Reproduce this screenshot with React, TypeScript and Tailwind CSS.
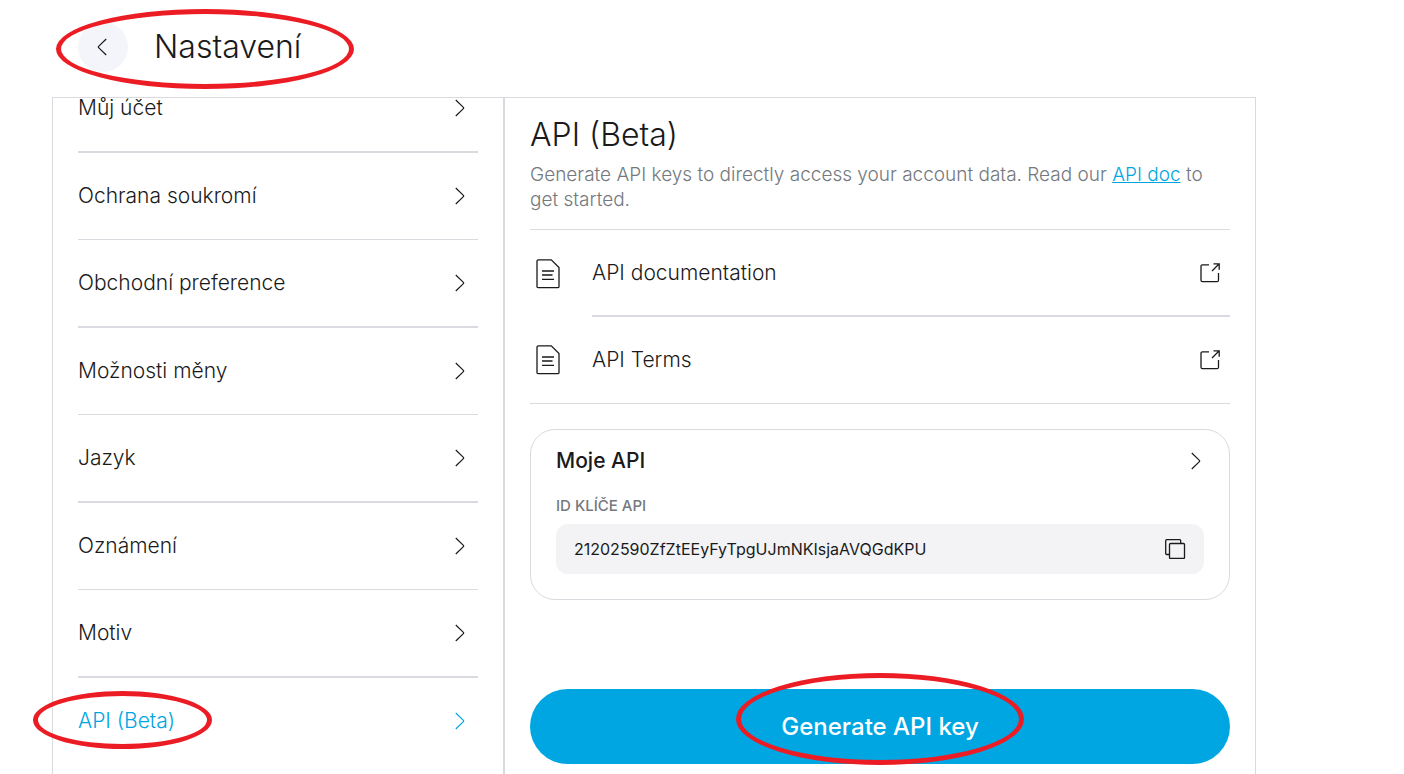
import { clsx } from 'clsx';

const menuItems = [
  'Můj účet',
  'Ochrana soukromí',
  'Obchodní preference',
  'Možnosti měny',
  'Jazyk',
  'Oznámení',
  'Motiv',
  'API (Beta)',
];

const activeItem = 'API (Beta)';

const apiLinks = ['API documentation', 'API Terms'];

export default function App() {
  return (
    <div className="flex h-screen flex-col overflow-hidden bg-white font-['Inter','Liberation_Sans',sans-serif] text-[#1a1a1a]">
      <header className="flex h-[97px] shrink-0 items-start pl-[78px] pt-[22px]">
        <div className="relative flex items-center gap-[26px]">
          <button type="button" aria-label="Zpět" className="flex size-[50px] items-center justify-center rounded-full bg-[#f4f5fa] pr-0.5">
            <Chevron className="rotate-180" />
          </button>
          <h1 className="text-[32px] font-light leading-10">Nastavení</h1>
          <Highlight className="-left-[22px] -top-[13px] h-20 w-[298px]" />
        </div>
      </header>

      <div className="ml-[52px] flex w-full max-w-[1204px] flex-1 border-x border-t border-[#dadae0]">
        <SettingsMenu />
        <ApiPanel />
      </div>
    </div>
  );
}

function SettingsMenu() {
  return (
    <nav className="w-[452px] shrink-0 border-r-2 border-[#dadae0] px-[25px]">
      {/* list is scrolled a little, first row sits partly above the edge */}
      <ul className="-mt-[33px]">
        {menuItems.map((item, index) => {
          const active = item === activeItem;
          return (
            <li
              key={item}
              className={clsx(
                'border-[#dadae0]',
                !active && (index % 2 === 0 ? 'border-b-2' : 'border-b'),
              )}
            >
              <a
                href="#"
                className={clsx(
                  'flex h-[86px] items-center justify-between pr-[13px] text-[21px] font-light leading-7',
                  active && 'text-[#00a6e1]',
                )}
              >
                <span className="relative">
                  {item}
                  {active && <Highlight className="-left-[45px] -top-4 h-[58px] w-[179px]" />}
                </span>
                <Chevron />
              </a>
            </li>
          );
        })}
      </ul>
    </nav>
  );
}

function ApiPanel() {
  return (
    <main className="min-w-0 flex-1 px-[25px] pt-[17px]">
      <h2 className="text-[32px] font-light leading-10">API (Beta)</h2>
      <p className="mt-[7px] border-b border-[#dadae0] pb-[17px] text-[19px] font-light leading-[25px] text-[#74797d]">
        Generate API keys to directly access your account data. Read our{' '}
        <a href="#" className="text-[#00a6e1] underline">API doc</a> to get started.
      </p>

      <ul className="border-b border-[#dadae0]">
        {apiLinks.map((label, index) => (
          <li key={label}>
            <a href="#" className="flex items-center text-[21px] font-light leading-7">
              <span className="w-[62px] shrink-0 pl-1.5">
                <DocumentIcon />
              </span>
              <span
                className={clsx(
                  'flex flex-1 items-center justify-between border-[#dadae0] pr-2.5',
                  index === 0 ? 'h-[87px] border-b-2' : 'h-[86px]',
                )}
              >
                {label}
                <ExternalIcon />
              </span>
            </a>
          </li>
        ))}
      </ul>

      <section className="mt-[25px] rounded-[25px] border border-[#dadae0] p-[25px] pt-4">
        <div className="flex items-center justify-between pr-[3px]">
          <h3 className="text-[21px] font-medium leading-[30px]">Moje API</h3>
          <button type="button" aria-label="Moje API">
            <Chevron />
          </button>
        </div>
        <p className="mt-5 text-[15px] font-medium leading-5 text-[#74797d]">ID KLÍČE API</p>
        <div className="mt-2 flex h-[50px] items-center justify-between rounded-xl bg-[#f3f3f6] px-[18px]">
          <span className="text-base">21202590ZfZtEEyFyTpgUJmNKIsjaAVQGdKPU</span>
          <button type="button" aria-label="Kopírovat">
            <CopyIcon />
          </button>
        </div>
      </section>

      <button
        type="button"
        className="relative mt-[89px] flex h-[75px] w-full items-center justify-center rounded-full bg-[#00a6e1] text-2xl font-medium text-white"
      >
        Generate API key
        <span className="absolute inset-0 flex items-center justify-center">
          <Highlight className="-top-4 h-[92px] w-[288px]" />
        </span>
      </button>
    </main>
  );
}

// Red pen ring drawn round the steps to follow
function Highlight({ className }: { className: string }) {
  return <span aria-hidden="true" className={clsx('pointer-events-none absolute rounded-[50%] border-[5px] border-[#ec1c24]', className)} />;
}

function Chevron({ className }: { className?: string }) {
  return (
    <svg width="10" height="18" viewBox="0 0 10 18" fill="none" stroke="currentColor" strokeWidth="1.2" className={className}>
      <path d="M.8 1 8.4 8.4q.6.6 0 1.2L.8 17" />
    </svg>
  );
}

function DocumentIcon() {
  return (
    <svg width="24" height="30" viewBox="0 0 24 30" fill="none" stroke="currentColor" strokeWidth="1.3">
      <path d="M2.5 .8H15.300l7.700 7.700v19q0 1.200-1.200 1.200H2.200Q1 28.700 1 27.500V2.200Q1 .8 2.500 .8Z" />
      <path d="M6 12h12M6 16h10.500M6 20.300h12" />
    </svg>
  );
}

function ExternalIcon() {
  return (
    <svg width="20" height="20" viewBox="0 0 20 20" fill="none" stroke="currentColor" strokeWidth="1.3">
      <path d="M9 1.800H2.500Q1 1.800 1 3.300v14Q1 18.700 2.500 18.700h14.500q1.500 0 1.500-1.500V10M12 8 19 1M13.500 .8H19.200v6" />
    </svg>
  );
}

function CopyIcon() {
  return (
    <svg width="21" height="20" viewBox="0 0 21 20" fill="none" stroke="currentColor" strokeWidth="1.3">
      <rect x="4.500" y="4.500" width="15" height="15" rx="1" />
      <path d="M4.500 15.500H1.700q-1 0-1-1V1.700q0-1 1-1h13q1 0 1 1v2.800" />
    </svg>
  );
}
